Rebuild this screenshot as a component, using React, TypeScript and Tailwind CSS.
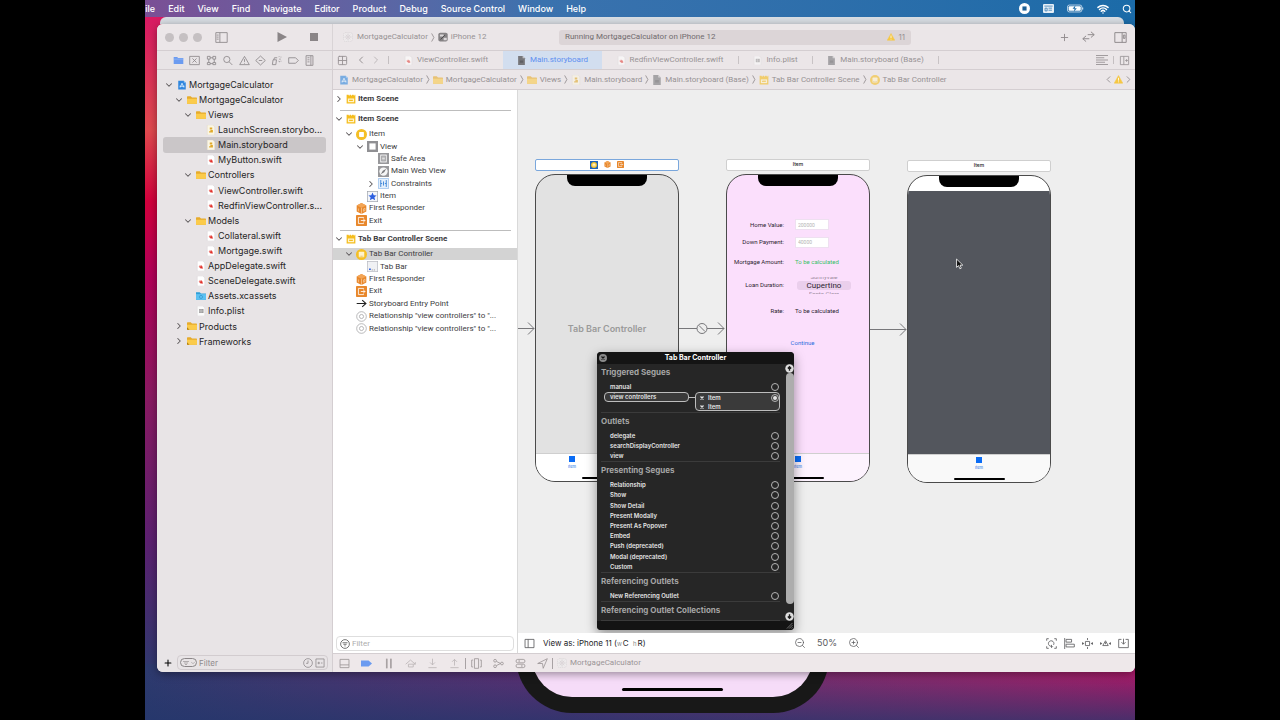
// Xcode workspace on a macOS desktop: navigator, outline, storyboard canvas
// and the floating connections panel of the selected controller.

import React from "react";
import {
  ChevronDown,
  ChevronLeft,
  ChevronRight,
  Grid2x2,
  Plus,
  Search,
  Wifi,
  ZoomIn,
  ZoomOut,
} from "lucide-react";

type IconName =
  | "project"
  | "folder"
  | "group"
  | "assets"
  | "storyboard"
  | "doc"
  | "swift"
  | "plist"
  | "scene"
  | "item"
  | "view"
  | "safe"
  | "web"
  | "constraints"
  | "star"
  | "responder"
  | "exit"
  | "controller"
  | "tabbar"
  | "entry"
  | "relation"
  | "warning"
  | "app"
  | "sim";

// 16x16 artwork for every coloured glyph used in lists, tabs and crumbs.
const ART: Record<IconName, React.ReactNode> = {
  project: (
    <>
      <path d="M2 1h9l3 3v11H2z" fill="#2f86de" />
      <path d="M11 1v3h3z" fill="#b9dcfa" />
      <path d="M5 12l3-7 3 7M4 10h8" stroke="#d5ebff" strokeWidth="1.4" fill="none" />
    </>
  ),
  folder: (
    <>
      <path d="M0 3a1 1 0 0 1 1-1h5l2 2h7a1 1 0 0 1 1 1v8a1 1 0 0 1-1 1H1a1 1 0 0 1-1-1z" fill="#e6ab2c" />
      <path d="M0 6h16v7a1 1 0 0 1-1 1H1a1 1 0 0 1-1-1z" fill="#fbcb4b" />
    </>
  ),
  group: (
    <>
      <path d="M0 3a1 1 0 0 1 1-1h5l2 2h7a1 1 0 0 1 1 1v8a1 1 0 0 1-1 1H1a1 1 0 0 1-1-1z" fill="#e6ab2c" />
      <path d="M0 6h16v7a1 1 0 0 1-1 1H1a1 1 0 0 1-1-1z" fill="#fbcb4b" />
      <path d="M0 10l4 4H1a1 1 0 0 1-1-1z" fill="#b07f14" />
    </>
  ),
  assets: (
    <>
      <path d="M0 2h6l2 2h8v10H0z" fill="#2f9fd8" />
      <path d="M0 5h16v9H0z" fill="#5cc1f2" />
      <circle cx="8" cy="9.5" r="2.5" fill="none" stroke="#2b90c7" />
    </>
  ),
  storyboard: (
    <>
      <path d="M2 0h9l3 3v13H2z" fill="#fbf6e4" stroke="#d9d2bd" strokeWidth=".6" />
      <path d="M6 4h4v3H6zM7 8h4v4H5v-2h2z" fill="#e0a92a" />
    </>
  ),
  doc: (
    <>
      <path d="M2 0h8l4 4v12H2z" fill="#77777b" />
      <path d="M10 0v4h4z" fill="#c9c7ca" />
      <path d="M5 8h6v4H5z" fill="#5f5f63" />
    </>
  ),
  swift: (
    <>
      <path d="M2 0h9l3 3v13H2z" fill="#ffffff" stroke="#cfcacc" strokeWidth=".6" />
      <path
        d="M5 8.500c1.500 1.200 2.500 1.400 3.200 1.300L6 7.300l2.800 1.900L8 7c2 1.300 2.400 2.600 2.200 3.600.6.6.5 1 .3 1.400-.5-.6-1-.4-1.600-.3C7.400 12 5.800 10.800 5 8.500z"
        fill="#e0302a"
        stroke="#e0302a"
        strokeWidth=".7"
      />
    </>
  ),
  plist: (
    <>
      <path d="M2 0h9l3 3v13H2z" fill="#fbfbfb" stroke="#d4d0d2" strokeWidth=".6" />
      <path d="M5 5h7v6H5z" fill="#8d8b8d" />
      <path d="M5 7h7M5 9h7M8 5v6" stroke="#fff" strokeWidth=".5" />
    </>
  ),
  scene: (
    <>
      <path d="M1 1h3l1 2 1-2h2l1 2 1-2h2l1 2 1-2h1v14H1z" fill="#f5bd1d" />
      <path d="M3 7h10v6H3z" fill="#fff4cc" />
      <path d="M5 9h6v2H5z" fill="#f5bd1d" />
    </>
  ),
  item: (
    <>
      <circle cx="8" cy="8" r="8" fill="#f5bf25" />
      <rect x="4.5" y="4.5" width="7" height="7" rx="1" fill="#fff" />
    </>
  ),
  view: (
    <>
      <rect width="16" height="16" fill="#909093" />
      <rect x="3.5" y="3.5" width="9" height="9" fill="#fff" />
    </>
  ),
  safe: (
    <>
      <rect width="16" height="16" fill="#98989b" />
      <rect x="4" y="3" width="8" height="10" fill="none" stroke="#fff" strokeWidth="1.3" />
      <path d="M6 6h4M6 8h4M6 10h4" stroke="#fff" />
    </>
  ),
  web: (
    <>
      <rect width="16" height="16" fill="#98989b" />
      <circle cx="8" cy="8" r="6" fill="#f6f6f6" />
      <path d="M4 12l3-5 5-3-3 5z" fill="#77777a" />
    </>
  ),
  constraints: (
    <>
      <rect x=".5" y=".5" width="15" height="15" rx="1" fill="#e3effc" stroke="#86b3e6" />
      <path d="M4 3v10M12 3v10M8 5v6M4 8h2M10 8h2" stroke="#3f86d9" strokeWidth="1.4" />
    </>
  ),
  star: (
    <>
      <rect x=".5" y=".5" width="15" height="15" fill="#f3f5f9" stroke="#9da2ab" />
      <path d="M8 2l1.800 4 4.200.4-3.200 2.800 1 4.300L8 11.300l-3.800 2.200 1-4.300L2 6.400 6.200 6z" fill="#2c5fe0" />
    </>
  ),
  responder: (
    <>
      <path d="M8 0l7 3.500v9L8 16l-7-3.500v-9z" fill="#e8872b" />
      <path d="M1 3.500L8 7l7-3.500L8 0z" fill="#f3a556" />
      <path d="M8 7v9M3.500 8v4M11 8.500l2-1v3.500l-2 1z" stroke="#fbd9b2" strokeWidth=".9" fill="none" />
    </>
  ),
  exit: (
    <>
      <rect width="16" height="16" rx="1" fill="#e8872b" />
      <path d="M11 5V3.500H3.500v9H11V11M7 8h6M11 6l2 2-2 2" stroke="#fff" strokeWidth="1.2" fill="none" />
    </>
  ),
  controller: (
    <>
      <circle cx="8" cy="8" r="8" fill="#f5bf25" />
      <rect x="4" y="4" width="8" height="8" rx="1" fill="#fff3cb" />
      <path d="M5.500 10.500h1M7.500 10.500h1M9.500 10.500h1" stroke="#c88d00" />
    </>
  ),
  tabbar: (
    <>
      <rect x=".5" y=".5" width="15" height="15" fill="#f0f1f4" stroke="#b7b9c0" />
      <path d="M3 12h2.500" stroke="#2c5fe0" strokeWidth="2.5" />
      <path d="M7 13h1M10 13h1" stroke="#4a4a4d" strokeWidth="1.2" />
    </>
  ),
  entry: <path d="M1 8h13M9 3l5.500 5L9 13" stroke="#222" strokeWidth="1.5" fill="none" />,
  relation: (
    <>
      <circle cx="8" cy="8" r="7" fill="none" stroke="#9b9b9e" />
      <circle cx="8" cy="8" r="3" fill="none" stroke="#9b9b9e" />
    </>
  ),
  warning: (
    <>
      <path d="M8 1l7.500 13.500H.5z" fill="#f6c844" stroke="#f6c844" strokeLinejoin="round" />
      <path d="M8 5v5M8 11.500v1.500" stroke="#fff" strokeWidth="1.5" />
    </>
  ),
  app: (
    <>
      <rect x="1" y="1" width="14" height="14" rx="3" fill="#efeced" stroke="#cfcacc" strokeWidth=".8" strokeDasharray="2 1" />
      <path d="M4 4l8 8M12 4l-8 8M8 2v12M2 8h12" stroke="#d3cdd0" strokeWidth=".7" />
      <circle cx="8" cy="8" r="3.5" fill="none" stroke="#cfcacc" strokeWidth=".7" />
    </>
  ),
  sim: (
    <>
      <rect x=".5" y="1" width="15" height="14" rx="3" fill="#858284" />
      <path d="M3 4h6v3H3zM9 9h5v4H9z" fill="#dcd8da" />
      <path d="M4 12l7-7" stroke="#4c4a4c" strokeWidth="1.5" />
    </>
  ),
};

function Art({ name, className = "size-[10px]" }: { name: IconName; className?: string }) {
  return (
    <svg viewBox="0 0 16 16" className={`shrink-0 ${className}`} aria-hidden="true">
      {ART[name]}
    </svg>
  );
}

// Thin grey line icons, drawn on the same 16x16 grid.
function Line({ d, className = "size-[11px]" }: { d: string; className?: string }) {
  return (
    <svg
      viewBox="0 0 16 16"
      fill="none"
      stroke="currentColor"
      strokeWidth="1.2"
      className={`shrink-0 ${className}`}
      aria-hidden="true"
    >
      <path d={d} />
    </svg>
  );
}

const PANEL_LEFT = "M1 2h14v12H1zM6 2v12M2 5h2.500M2 7.500h2.500M2 10h2.500";
const PANEL_RIGHT = "M1 2h14v12H1zM10 2v12M11.500 5h2v4h-2z";

function IconButton({
  label,
  className = "",
  children,
}: {
  label: string;
  className?: string;
  children: React.ReactNode;
}) {
  return (
    <button type="button" aria-label={label} className={`flex shrink-0 items-center justify-center ${className}`}>
      {children}
    </button>
  );
}

// ─── Menu bar ────────────────────────────────────────────────────────────────

const MENUS = ["File", "Edit", "View", "Find", "Navigate", "Editor", "Product", "Debug", "Source Control", "Window", "Help"];

function MenuBar() {
  return (
    <header className="relative flex h-[17px] shrink-0 items-center justify-between overflow-hidden bg-linear-to-r from-[#7a4f95] via-[#3a72ae] via-40% to-[#1b6ba8] pr-[3px] text-white">
      {/* The first menu runs under the left screen edge */}
      <nav className="-ml-[5px] flex items-center gap-[13px] text-[9px] leading-none font-medium">
        {MENUS.map((menu) => (
          <button key={menu} type="button" className="shrink-0">
            {menu}
          </button>
        ))}
      </nav>
      <div className="flex items-center gap-[13px]">
        <IconButton label="Stop recording">
          <svg viewBox="0 0 16 16" className="size-[11px]">
            <circle cx="8" cy="8" r="8" fill="#fff" />
            <rect x="5" y="5" width="6" height="6" fill="#1b5f96" />
          </svg>
        </IconButton>
        <IconButton label="Input menu">
          <svg viewBox="0 0 16 13" className="h-[9px] w-[11px]">
            <rect width="16" height="13" rx="1.5" fill="#e6eff7" />
            <path d="M2 3h12M3 6h3v4H3zM8 6h5M8 9h5" stroke="#1d6ba7" fill="none" />
          </svg>
        </IconButton>
        <IconButton label="Battery">
          <svg viewBox="0 0 26 12" className="h-[9px] w-[17px]">
            <rect x=".7" y=".7" width="22" height="10.6" rx="3" fill="none" stroke="#dbe8f3" strokeWidth="1.2" />
            <rect x="2.5" y="2.5" width="18.5" height="7" rx="1.5" fill="#fff" />
            <path d="M24 4.500v3" stroke="#dbe8f3" strokeWidth="1.6" />
            <path d="M13 1L8.500 6.500h3L10.500 11 15 5.500h-3z" fill="#1d6ba7" />
          </svg>
        </IconButton>
        <IconButton label="Wi-Fi">
          <Wifi className="size-[12px]" strokeWidth={3} />
        </IconButton>
        <IconButton label="Spotlight">
          <Search className="size-[10px]" strokeWidth={2.5} />
        </IconButton>
      </div>
    </header>
  );
}

// ─── Window toolbar ──────────────────────────────────────────────────────────

function Toolbar() {
  return (
    <div className="flex h-[27px] shrink-0 border-b border-[#d4ced1] bg-[#ebe6e8] text-[#979294]">
      <div className="flex w-[176px] shrink-0 items-center border-r border-[#d9d4d6] pl-[8px]">
        <div className="flex gap-[5px]">
          <button type="button" aria-label="Close" className="size-[9px] rounded-full bg-[#c5c0c2]" />
          <button type="button" aria-label="Minimize" className="size-[9px] rounded-full bg-[#c5c0c2]" />
          <button type="button" aria-label="Zoom" className="size-[9px] rounded-full bg-[#c5c0c2]" />
        </div>
        <IconButton label="Toggle navigator" className="ml-[13px]">
          <Line d={PANEL_LEFT} className="size-[13px]" />
        </IconButton>
        <IconButton label="Run" className="ml-[49px]">
          <svg viewBox="0 0 10 10" className="size-[10px]">
            <path d="M.5 0L10 5 .5 10z" fill="#8a8587" />
          </svg>
        </IconButton>
        <IconButton label="Stop" className="ml-[23px]">
          <span className="size-[8px] bg-[#8a8587]" />
        </IconButton>
      </div>
      <div className="flex min-w-0 flex-1 items-center pr-[8px] pl-[10px]">
        <div className="flex w-[216px] shrink-0 items-center font-[Roboto] text-[8px]">
          <Art name="app" />
          <span className="ml-[4px]">MortgageCalculator</span>
          <Crumb />
          <Art name="sim" />
          <span className="ml-[3px]">iPhone 12</span>
        </div>
        <div className="flex h-[15px] w-[352px] items-center justify-between rounded-[3px] bg-[#dcd5d7] px-[6px] text-[8px] text-[#716b6e]">
          <span className="font-[Roboto]">Running MortgageCalculator on iPhone 12</span>
          <span className="flex items-center gap-[3px] text-[#989294]">
            <Art name="warning" className="size-[8px]" />
            11
          </span>
        </div>
        <div className="ml-auto flex items-center text-[#8f8a8c]">
          <IconButton label="Add">
            <Plus className="size-[11px]" />
          </IconButton>
          <IconButton label="Review changes" className="ml-[12px]">
            <Line d="M5 6l-4 3.500L5 13M1 9.500h8M11 1l4 3.500L11 8M15 4.500H7" className="size-[13px]" />
          </IconButton>
          <IconButton label="Toggle inspectors" className="ml-[19px]">
            <Line d={PANEL_RIGHT} className="size-[13px]" />
          </IconButton>
        </div>
      </div>
    </div>
  );
}

function Crumb() {
  return (
    <svg viewBox="0 0 4 10" className="mx-[3px] h-[9px] w-[4px] shrink-0" fill="none" stroke="currentColor" aria-hidden="true">
      <path d="M.5.5L3 5 .5 9.500" />
    </svg>
  );
}

// ─── Navigator ───────────────────────────────────────────────────────────────

const NAV_ICONS: [string, string][] = [
  ["Source control", "M1 2h14v12H1zM5 5l6 6M11 5l-6 6"],
  ["Symbols", "M2 2h4v4H2zM10 2h4v4h-4zM6 4h4M4 6v5M12 6v5M2 11h4v3H2zM10 11h4v3h-4zM6 12.500h4"],
  ["Find", "M7 2a4.500 4.500 0 1 0 0 9a4.500 4.500 0 0 0 0-9M10.500 10l4.500 4.500"],
  ["Issues", "M8 2l7 12H1zM8 6v4M8 11.500v1"],
  ["Tests", "M8 1.500L15 8 8 14.500 1 8zM5.500 8h5"],
  ["Debug", "M2 14l1-7h5l-1 7zM4 7l1-3h4M11 3l1-1M12 6h2M11 9l2 1M14 3h1M14 9h1"],
  ["Breakpoints", "M1 4h10l4 4-4 4H1z"],
  ["Reports", "M3 1h10v14H3zM10 1v14M5 4h3M5 7h3M5 10h3"],
];

type Node = { label: string; icon: IconName; depth: number; open?: boolean; selected?: boolean };

const FILES: Node[] = [
  { label: "MortgageCalculator", icon: "project", depth: 0, open: true },
  { label: "MortgageCalculator", icon: "folder", depth: 1, open: true },
  { label: "Views", icon: "folder", depth: 2, open: true },
  { label: "LaunchScreen.storybo...", icon: "storyboard", depth: 3 },
  { label: "Main.storyboard", icon: "storyboard", depth: 3, selected: true },
  { label: "MyButton.swift", icon: "swift", depth: 3 },
  { label: "Controllers", icon: "folder", depth: 2, open: true },
  { label: "ViewController.swift", icon: "swift", depth: 3 },
  { label: "RedfinViewController.s...", icon: "swift", depth: 3 },
  { label: "Models", icon: "folder", depth: 2, open: true },
  { label: "Collateral.swift", icon: "swift", depth: 3 },
  { label: "Mortgage.swift", icon: "swift", depth: 3 },
  { label: "AppDelegate.swift", icon: "swift", depth: 2 },
  { label: "SceneDelegate.swift", icon: "swift", depth: 2 },
  { label: "Assets.xcassets", icon: "assets", depth: 2 },
  { label: "Info.plist", icon: "plist", depth: 2 },
  { label: "Products", icon: "group", depth: 1, open: false },
  { label: "Frameworks", icon: "group", depth: 1, open: false },
];

const FILE_INDENT = ["pl-px", "pl-[11px]", "pl-[20px]", "pl-[30px]"];

function Disclosure({ open }: { open?: boolean }) {
  if (open === undefined) return <span className="w-[10px] shrink-0" />;
  const Chevron = open ? ChevronDown : ChevronRight;
  return <Chevron className="size-[10px] shrink-0 text-[#5c585a]" strokeWidth={2.5} />;
}

function Navigator() {
  return (
    <aside className="flex w-[176px] shrink-0 flex-col border-r border-[#d4ced1] bg-[#e8e4e6]">
      <div className="flex h-[19px] shrink-0 items-center justify-between border-b border-[#d4ced1] pr-[17px] pl-[16px] text-[#8b8688]">
        <IconButton label="Project navigator">
          <svg viewBox="0 0 16 16" className="size-[11px]">
            <path d="M1 3h5l1.500 1.500H15V13H1z" fill="#6b9bf0" />
            <path d="M1 6h14" stroke="#a9c5f7" strokeWidth=".8" />
          </svg>
        </IconButton>
        {NAV_ICONS.map(([label, d]) => (
          <IconButton key={label} label={label}>
            <Line d={d} />
          </IconButton>
        ))}
      </div>
      <ul className="mt-[7px] grid h-[272px] shrink-0 px-[6px] text-[9px] text-[#262425]">
        {FILES.map((file, i) => (
          <li
            key={i}
            className={`flex items-center rounded-[3px] ${FILE_INDENT[file.depth]} ${file.selected ? "bg-[#cac6c8]" : ""}`}
          >
            <Disclosure open={file.open} />
            <span className="flex w-[15px] shrink-0 justify-center">
              <Art name={file.icon} />
            </span>
            <span className="whitespace-nowrap">{file.label}</span>
          </li>
        ))}
      </ul>
      <div className="mt-auto flex h-[19px] shrink-0 items-center gap-[4px] pr-[4px] pl-[6px]">
        <IconButton label="Add file">
          <Plus className="size-[10px]" strokeWidth={2.5} />
        </IconButton>
        <div className="flex h-[15px] min-w-0 flex-1 items-center gap-[2px] rounded-[4px] border border-[#d2cccf] px-[2px] text-[#8b8688]">
          <span className="flex h-[9px] w-[17px] shrink-0 items-center justify-center rounded-full border border-[#8b8688]">
            <Line d="M2 5h12M4 8h8M6 11h4" className="size-[8px]" />
            <ChevronDown className="size-[6px]" />
          </span>
          <input
            aria-label="Filter files"
            placeholder="Filter"
            className="w-full min-w-0 bg-transparent text-[8px] outline-none placeholder:text-[#8f8a8c]"
          />
          <Line d="M8 1a7 7 0 1 0 0 14a7 7 0 0 0 0-14M8 4v4.500H5" className="size-[10px]" />
          <Line d="M1.500 1.500h13v13h-13zM4 8h4M6 6v4M9.500 8H12" className="size-[10px]" />
        </div>
      </div>
    </aside>
  );
}

// ─── Tabs and jump bar ───────────────────────────────────────────────────────

const TABS: { label: string; icon: IconName; width: string; active?: boolean }[] = [
  { label: "ViewController.swift", icon: "swift", width: "w-[114px]" },
  { label: "Main.storyboard", icon: "doc", width: "w-[99px]", active: true },
  { label: "RedfinViewController.swift", icon: "swift", width: "w-[137px] border-r" },
  { label: "Info.plist", icon: "plist", width: "w-[74px] border-r" },
  { label: "Main.storyboard (Base)", icon: "doc", width: "w-[126px] border-r" },
];

const CRUMBS: { label: string; icon: IconName }[] = [
  { label: "MortgageCalculator", icon: "project" },
  { label: "MortgageCalculator", icon: "folder" },
  { label: "Views", icon: "folder" },
  { label: "Main.storyboard", icon: "storyboard" },
  { label: "Main.storyboard (Base)", icon: "doc" },
  { label: "Tab Bar Controller Scene", icon: "scene" },
  { label: "Tab Bar Controller", icon: "controller" },
];

function EditorTabs() {
  return (
    <div className="flex h-[19px] shrink-0 items-center border-b border-[#d4ced1] bg-[#ebe6e8] pr-[5px] pl-[4px] text-[#989395]">
      <IconButton label="Related items" className="w-[11px]">
        <Grid2x2 className="size-[11px]" strokeWidth={2} />
      </IconButton>
      <IconButton label="Back" className="ml-[7px]">
        <ChevronLeft className="size-[12px]" />
      </IconButton>
      <IconButton label="Forward" className="ml-[3px]">
        <ChevronRight className="size-[12px] text-[#bdb8ba]" />
      </IconButton>
      <span className="ml-[6px] h-[8px] border-l border-[#c4bfc1]" />
      <div role="tablist" className="flex h-full items-center font-[Roboto] text-[8px]">
        {TABS.map((tab) => (
          <button
            key={tab.label}
            type="button"
            role="tab"
            aria-selected={!!tab.active}
            className={`flex items-center justify-center gap-[4px] border-[#c8c3c5] whitespace-nowrap ${tab.width} ${
              tab.active ? "h-full bg-[#d2deef] text-[#5e8ff0]" : "h-[8px]"
            }`}
          >
            <Art name={tab.icon} className={tab.active ? "size-[9px]" : "size-[9px] opacity-60"} />
            {tab.label}
          </button>
        ))}
      </div>
      <IconButton label="Editor options" className="ml-auto">
        <Line d="M0 2h16M0 5h11M0 8h16M0 11h12M0 14h16" className="size-[12px]" />
      </IconButton>
      <span className="mx-[5px] h-[8px] border-l border-[#c4bfc1]" />
      <IconButton label="Add editor">
        <Line d="M2 2h12v12H2zM7 2v12M9 8h4M11 6v4" />
      </IconButton>
    </div>
  );
}

function JumpBar() {
  return (
    <div className="flex h-[20px] shrink-0 items-center border-b border-[#d4ced1] bg-[#ebe6e8] pr-px pl-[6px] font-[Roboto] text-[8px] text-[#979294]">
      {CRUMBS.map((crumb, i) => (
        <React.Fragment key={i}>
          {i > 0 && <Crumb />}
          <button type="button" className="flex shrink-0 items-center gap-[3px]">
            <Art name={crumb.icon} className="size-[10px] opacity-60" />
            {crumb.label}
          </button>
        </React.Fragment>
      ))}
      <div className="ml-auto flex items-center">
        <ChevronLeft className="size-[11px]" />
        <Art name="warning" className="size-[9px]" />
        <ChevronRight className="size-[11px]" />
      </div>
    </div>
  );
}

// ─── Document outline ────────────────────────────────────────────────────────

const FIRST_SCENE: Node[] = [
  { label: "Item", icon: "item", depth: 0, open: true },
  { label: "View", icon: "view", depth: 1, open: true },
  { label: "Safe Area", icon: "safe", depth: 2 },
  { label: "Main Web View", icon: "web", depth: 2 },
  { label: "Constraints", icon: "constraints", depth: 2, open: false },
  { label: "Item", icon: "star", depth: 1 },
  { label: "First Responder", icon: "responder", depth: 0 },
  { label: "Exit", icon: "exit", depth: 0 },
];

const SECOND_SCENE: Node[] = [
  { label: "Tab Bar Controller", icon: "controller", depth: 0, open: true, selected: true },
  { label: "Tab Bar", icon: "tabbar", depth: 1 },
  { label: "First Responder", icon: "responder", depth: 0 },
  { label: "Exit", icon: "exit", depth: 0 },
  { label: "Storyboard Entry Point", icon: "entry", depth: 0 },
  { label: 'Relationship "view controllers" to "...', icon: "relation", depth: 0 },
  { label: 'Relationship "view controllers" to "...', icon: "relation", depth: 0 },
];

const OUTLINE_INDENT = ["pl-[11px]", "pl-[22px]", "pl-[33px]"];

function SceneTitle({ label, open }: { label: string; open: boolean }) {
  return (
    <div className="flex h-[16px] items-center pl-px font-bold">
      <Disclosure open={open} />
      <Art name="scene" className="ml-[2px] size-[10px]" />
      <span className="ml-[2px]">{label}</span>
    </div>
  );
}

function OutlineList({ nodes, className }: { nodes: Node[]; className: string }) {
  return (
    <ul className={`mt-px grid ${className}`}>
      {nodes.map((node, i) => (
        <li
          key={i}
          className={`flex min-h-0 items-center whitespace-nowrap ${OUTLINE_INDENT[node.depth]} ${
            node.selected ? "bg-[#d3d3d3]" : ""
          }`}
        >
          <Disclosure open={node.open} />
          <Art name={node.icon} className="ml-[2px] size-[11px]" />
          <span className="ml-[2px]">{node.label}</span>
        </li>
      ))}
    </ul>
  );
}

function Outline() {
  return (
    <section className="flex w-[185px] shrink-0 flex-col border-r border-[#d9d9d9] bg-white font-[Roboto] text-[8px] leading-[12px] text-[#3c3c3e]">
      <div className="pt-px">
        <SceneTitle label="Item Scene" open={false} />
      </div>
      <hr className="mt-[3px] mr-[6px] ml-[7px] border-[#bdbdbd]" />
      <SceneTitle label="Item Scene" open />
      <OutlineList nodes={FIRST_SCENE} className="h-[99px]" />
      <hr className="mt-[3px] mr-[6px] ml-[7px] border-[#bdbdbd]" />
      <SceneTitle label="Tab Bar Controller Scene" open />
      <OutlineList nodes={SECOND_SCENE} className="h-[87px]" />
      <div className="mx-[3px] mt-auto mb-[2px] flex h-[15px] shrink-0 items-center gap-[2px] rounded-[4px] border border-[#dedede] px-[3px]">
        <Line
          d="M8 1a7 7 0 1 0 0 14a7 7 0 0 0 0-14M4 6h8M5.500 8.500h5M7 11h2"
          className="size-[10px] text-[#4a4a4a]"
        />
        <input
          aria-label="Filter outline"
          placeholder="Filter"
          className="w-full min-w-0 bg-transparent outline-none placeholder:text-[#adadad]"
        />
      </div>
    </section>
  );
}

// ─── Canvas ──────────────────────────────────────────────────────────────────

function Scene({
  place,
  title,
  selected,
  screen,
  tabBar = "bg-white",
  tabAlign = "self-center",
  children,
}: {
  place: string;
  title: React.ReactNode;
  selected?: boolean;
  screen: string;
  tabBar?: string;
  tabAlign?: string;
  children?: React.ReactNode;
}) {
  return (
    <article className={`absolute w-[144px] ${place}`}>
      <div
        className={`flex h-[12px] items-center justify-center rounded-[2px] border bg-white text-[5px] font-medium text-[#222] ${
          selected ? "border-[#7aa7dc]" : "border-[#cfcfcf]"
        }`}
      >
        {title}
      </div>
      <div
        className={`relative mt-[3px] flex h-[308px] flex-col overflow-hidden rounded-[20px] border border-[#4a4a4a] ${screen}`}
      >
        <div className="absolute top-0 left-1/2 h-[11px] w-[80px] -translate-x-1/2 rounded-b-[8px] bg-black" />
        <div className="min-h-0 flex-1">{children}</div>
        <div className={`flex h-[28px] shrink-0 flex-col border-t border-[#cfcfcf] ${tabBar}`}>
          <div className={`flex w-[72px] flex-1 flex-col items-center pt-[2px] text-[4px] leading-[5px] text-[#1a73e8] ${tabAlign}`}>
            <span className="mb-[2px] size-[6px] bg-[#0a6cf5]" />
            Item
          </div>
          <span className="mb-[2px] h-[2px] w-[51px] self-center rounded-full bg-black" />
        </div>
      </div>
    </article>
  );
}

function Field({ label, height, children }: { label: React.ReactNode; height: string; children: React.ReactNode }) {
  return (
    <div className={`grid grid-cols-[57px_1fr] items-center gap-[11px] ${height}`}>
      <span className="text-right whitespace-nowrap">{label}</span>
      <div>{children}</div>
    </div>
  );
}

function MortgageForm() {
  return (
    <form className="pt-[41px] font-[Roboto] text-[6px] leading-[8px] text-[#2b2430]">
      <Field height="h-[17px]" label={<label htmlFor="home-value">Home Value:</label>}>
        <input
          id="home-value"
          placeholder="200000"
          className="block h-[11px] w-[34px] border border-[#eee0f0] bg-white px-[2px] text-[5px] placeholder:text-[#b4b4b4]"
        />
      </Field>
      <Field height="h-[18px]" label={<label htmlFor="down-payment">Down Payment:</label>}>
        <input
          id="down-payment"
          placeholder="40000"
          className="block h-[11px] w-[34px] border border-[#eee0f0] bg-white px-[2px] text-[5px] placeholder:text-[#b4b4b4]"
        />
      </Field>
      <Field height="h-[22px]" label="Mortgage Amount:">
        <output className="text-[#37c268]">To be calculated</output>
      </Field>
      <Field height="h-[24px]" label="Loan Duration:">
        {/* Wheel picker: the neighbours of the chosen value are half hidden */}
        <div role="listbox" aria-label="Loan duration" className="ml-[2px] flex w-[54px] flex-col items-center">
          <div className="flex h-[4px] items-end overflow-hidden leading-[8px] text-[#9c8d9f]">Sunnyvale</div>
          <div
            role="option"
            aria-selected="true"
            className="h-[9px] w-full rounded-[3px] bg-[#eacfec] text-center font-[Roboto] text-[8px] leading-[9px]"
          >
            Cupertino
          </div>
          <div className="h-[4px] overflow-hidden leading-[8px] text-[#9c8d9f]">Santa Clara</div>
        </div>
      </Field>
      <Field height="h-[28px]" label="Rate:">
        <output>To be calculated</output>
      </Field>
      <div className="flex h-[35px] items-center justify-center pl-[9px]">
        <button type="button" className="text-[#2b6fe0]">
          Continue
        </button>
      </div>
    </form>
  );
}

function Segues() {
  return (
    <svg
      className="absolute top-[228px] left-0 h-[20px] w-[390px]"
      viewBox="0 0 390 20"
      fill="none"
      stroke="#77777a"
      aria-hidden="true"
    >
      <path d="M0 10.500h16M10 4.500l6 6-6 6" />
      <path d="M161 10.500h18M189 10.500h17M200 4.500l6 6-6 6" />
      <circle cx="184" cy="10.5" r="5" />
      <path d="M181 7.500l6 6" />
      <path d="M351 11.500h37M382 5.500l6 6-6 6" />
    </svg>
  );
}

// ─── Connections panel ───────────────────────────────────────────────────────

const PRESENTING = [
  "Relationship",
  "Show",
  "Show Detail",
  "Present Modally",
  "Present As Popover",
  "Embed",
  "Push (deprecated)",
  "Modal (deprecated)",
  "Custom",
];

function Well({ label, connected }: { label: string; connected?: boolean }) {
  return (
    <button
      type="button"
      aria-label={`Connect ${label}`}
      className="flex size-[8px] shrink-0 items-center justify-center rounded-full border border-[#b4b4b4]"
    >
      {connected && <span className="size-[4px] rounded-full bg-[#e2e2e2]" />}
    </button>
  );
}

function Group({
  title,
  rows,
  className = "",
  children,
}: {
  title: string;
  rows?: string[];
  className?: string;
  children?: React.ReactNode;
}) {
  return (
    <section className="border-b border-[#3b3b3b]">
      <h3 className="h-[18px] text-[8px] leading-[17px] font-bold text-[#a5a5a5]">{title}</h3>
      {rows && (
        <ul className={`grid ${className}`}>
          {rows.map((row) => (
            <li key={row} className="flex min-h-0 items-center justify-between pr-px pl-[9px]">
              {row}
              <Well label={row} />
            </li>
          ))}
        </ul>
      )}
      {children}
    </section>
  );
}

function ScrollArrow({ label, d, className = "" }: { label: string; d: string; className?: string }) {
  return (
    <IconButton label={label} className={className}>
      <svg viewBox="0 0 16 16" className="size-[9px]">
        <circle cx="8" cy="8" r="7.5" fill="#dedede" />
        <path d={d} fill="none" stroke="#1c1c1c" strokeWidth="2.4" />
      </svg>
    </IconButton>
  );
}

function ConnectionsPanel() {
  return (
    <div
      role="dialog"
      aria-label="Tab Bar Controller connections"
      className="absolute top-[262px] left-[79px] flex w-[197px] flex-col overflow-hidden rounded-[4px] bg-[#262626] shadow-[0_4px_12px_rgba(0,0,0,0.4)]"
    >
      <div className="flex h-[12px] items-center bg-[#141414] px-[2px] text-[7px] text-white">
        <button
          type="button"
          aria-label="Close panel"
          className="flex size-[8px] items-center justify-center rounded-full bg-[#8a8a8a] text-[#141414]"
        >
          <svg viewBox="0 0 16 16" className="size-[8px]" aria-hidden="true">
            <path d="M5 5l6 6M11 5l-6 6" stroke="currentColor" strokeWidth="2.4" />
          </svg>
        </button>
        <h2 className="flex-1 pr-[8px] text-center font-bold">Tab Bar Controller</h2>
      </div>
      <div className="flex">
        <div className="min-w-0 flex-1 pr-[5px] pl-[4px] text-[6px] leading-[10px] font-semibold text-[#e4e4e4]">
          <Group title="Triggered Segues" rows={["manual"]} className="h-[10px]">
            <div className="flex h-[20px] items-start pl-[3px]">
              <span className="h-[10px] w-[85px] rounded-[4px] border border-[#bdbdbd] bg-[#3a3a3a] pl-[5px] leading-[8px]">
                view controllers
              </span>
              <span className="mt-[5px] w-[6px] border-t border-[#bdbdbd]" />
              <ul className="h-[19px] flex-1 rounded-[4px] border border-[#bdbdbd] bg-[#3a3a3a] pl-[4px] leading-[9px]">
                {[true, false].map((connected, i) => (
                  <li key={i} className="flex h-[9px] items-center">
                    <svg viewBox="0 0 8 8" className="mr-[4px] size-[4px]" aria-hidden="true">
                      <path d="M1 1l6 6M7 1L1 7" stroke="#e4e4e4" strokeWidth="2.5" />
                    </svg>
                    Item
                    {connected && (
                      <span className="ml-auto">
                        <Well label="Item" connected />
                      </span>
                    )}
                  </li>
                ))}
              </ul>
            </div>
          </Group>
          <Group title="Outlets" rows={["delegate", "searchDisplayController", "view"]} className="h-[30px]" />
          <Group title="Presenting Segues" rows={PRESENTING} className="h-[92px]" />
          <Group title="Referencing Outlets" rows={["New Referencing Outlet"]} className="h-[10px]" />
          <Group title="Referencing Outlet Collections" />
        </div>
        <div className="flex w-[9px] shrink-0 flex-col items-center">
          <ScrollArrow label="Scroll up" d="M8 12V5M5 8l3-3 3 3" />
          <span className="w-[8px] flex-1 rounded-full bg-[#adadad]" />
          <ScrollArrow label="Scroll down" d="M8 4v7M5 8l3 3 3-3" className="mt-[8px]" />
        </div>
      </div>
      <div className="flex h-[9px] items-center justify-end bg-[#141414] pr-px">
        <Line d="M2 15L15 2M7 15l8-8M12 15l3-3" className="size-[7px] text-[#bdbdbd]" />
      </div>
    </div>
  );
}

function Canvas() {
  return (
    <div className="relative min-h-0 flex-1 overflow-hidden bg-[#eeeeee]">
      <Segues />
      <Scene
        place="top-[69px] left-[17px]"
        selected
        screen="bg-[#e2e2e2]"
        tabAlign="self-start"
        title={
          <span className="flex gap-[6px]">
            <span className="flex size-[8px] items-center justify-center bg-[#1f62b8]">
              <Art name="controller" className="size-[6px]" />
            </span>
            <Art name="responder" className="size-[7px]" />
            <Art name="exit" className="size-[7px]" />
          </span>
        }
      >
        <div className="flex h-full items-center justify-center pt-[29px] text-[9px] font-semibold text-[#9a9a9a]">
          Tab Bar Controller
        </div>
      </Scene>
      <Scene place="top-[69px] left-[208px]" title="Item" screen="bg-[#fbdffc]" tabBar="bg-[#fdf3fe]">
        <MortgageForm />
      </Scene>
      <Scene place="top-[70px] left-[389px]" title="Item" screen="bg-white" tabBar="bg-[#f9f9f9]">
        <div className="h-full pt-[15px]">
          <div className="h-full bg-[#53565d]" />
        </div>
      </Scene>
      <ConnectionsPanel />
      <svg viewBox="0 0 10 14" className="absolute top-[168px] left-[438px] h-[12px] w-[8px]" aria-hidden="true">
        <path d="M.7.8v10.400L3.200 9l1.700 4 1.700-.8L5 8.400h3.500z" fill="#111" stroke="#fff" />
      </svg>
    </div>
  );
}

const CANVAS_TOOLS: [string, string][] = [
  ["Update frames", "M1 4V1h3M12 1h3v3M15 12v3h-3M4 15H1v-3M11 10a4 4 0 1 0-3 2M8 10v4l2-2"],
  ["Align", "M1 0v16M3 2h8v4H3zM3 9h12v4H3z"],
  ["Add constraints", "M5 5h6v6H5zM0 8h3M13 8h3M8 0v3M8 13v3M1 6v4M15 6v4"],
  ["Resolve issues", "M8 4l4 7H4zM8 6v3M0 8h3M13 8h3M1 6v4M15 6v4"],
  ["Embed in", "M5 2H1v12h14V2h-4M8 1v8M5 6l3 3 3-3"],
];

function CanvasBar() {
  return (
    <div className="flex h-[20px] shrink-0 items-center bg-white px-[6px] text-[8px] text-[#5b5b5d]">
      <IconButton label="Toggle outline">
        <Line d="M1.500 2h13v12h-13zM6 2v12" />
      </IconButton>
      <button type="button" className="ml-[8px] w-[112px] shrink-0 text-left whitespace-nowrap text-[#1d1d1f]">
        View as: iPhone 11 (<span className="mr-px text-[6px] text-[#8a8a8a]">w</span>C{" "}
        <span className="mr-px ml-[2px] text-[6px] text-[#8a8a8a]">h</span>R)
      </button>
      <div className="mr-auto ml-[139px] flex items-center gap-[11px]">
        <IconButton label="Zoom out">
          <ZoomOut className="size-[12px]" strokeWidth={1.5} />
        </IconButton>
        <span className="text-[9px]">50%</span>
        <IconButton label="Zoom in">
          <ZoomIn className="size-[12px]" strokeWidth={1.5} />
        </IconButton>
      </div>
      <div className="flex gap-[7px]">
        {CANVAS_TOOLS.map(([label, d]) => (
          <IconButton key={label} label={label}>
            <Line d={d} />
          </IconButton>
        ))}
      </div>
    </div>
  );
}

// ─── Debug bar ───────────────────────────────────────────────────────────────

const STEP_ICONS: [string, string][] = [
  ["Pause", "M5 1v14M11 1v14M6 1v14M12 1v14"],
  ["Step over", "M5 13h7V9H5zM1 9l7-6 7 6M12 9h3V6"],
  ["Step into", "M8 1v9M4.500 6.500L8 10l3.500-3.500M2 14h12"],
  ["Step out", "M8 11V2M4.500 5.500L8 2l3.500 3.500M2 14h12"],
];

const TOOL_ICONS: [string, string][] = [
  ["View hierarchy", "M5 1h6v14H5zM3 3H1v10h2M13 3h2v10h-2"],
  [
    "Memory graph",
    "M3 2a2 2 0 1 0 0 4a2 2 0 0 0 0-4M3 10a2 2 0 1 0 0 4a2 2 0 0 0 0-4M13 6a2 2 0 1 0 0 4a2 2 0 0 0 0-4M5 5l6 3M5 11l6-3",
  ],
  [
    "Environment",
    "M4 2h8a2 2 0 0 1 0 5H4a2 2 0 0 1 0-5M4 9h8a2 2 0 0 1 0 5H4a2 2 0 0 1 0-5M6 3v3M10 10v3",
  ],
  ["Simulate location", "M1 8L15 1 9 15 8 8z"],
];

function DebugBar() {
  return (
    <div className="flex h-[19px] shrink-0 items-center border-t border-[#d4ced1] bg-[#eee8ea] pl-[6px] font-[Roboto] text-[8px] text-[#9b9597]">
      <div className="flex gap-[11px]">
        <IconButton label="Hide debug area">
          <Line d="M1.500 2h13v12h-13zM1.500 10h13" />
        </IconButton>
        <IconButton label="Breakpoints">
          <svg viewBox="0 0 16 16" className="size-[11px]">
            <path d="M0 3.500h11L16 8l-5 4.500H0z" fill="#6b9bf0" />
          </svg>
        </IconButton>
        {STEP_ICONS.map(([label, d]) => (
          <IconButton key={label} label={label} className={label === "Pause" ? "" : "opacity-60"}>
            <Line d={d} />
          </IconButton>
        ))}
      </div>
      <span className="mx-[5px] h-[11px] border-l border-[#a8a2a4]" />
      <div className="flex gap-[11px]">
        {TOOL_ICONS.map(([label, d]) => (
          <IconButton key={label} label={label}>
            <Line d={d} />
          </IconButton>
        ))}
      </div>
      <span className="mx-[4px] h-[11px] border-l border-[#a8a2a4]" />
      <Art name="app" />
      <span className="ml-[3px]">MortgageCalculator</span>
    </div>
  );
}

export default function App() {
  return (
    <div className="h-screen overflow-hidden bg-black px-[145px] font-[Inter,'Liberation_Sans',sans-serif]">
      <div className="relative flex h-full flex-col overflow-hidden bg-[linear-gradient(to_bottom,#d81b62_3%,#e04a4e_18%,#d2003c_28%,#b20058_38%,#8a1a62_55%,#5c2070_75%,#2d3a6e_94%)]">
        <div className="absolute inset-x-0 top-0 h-[40px] bg-linear-to-r from-[#d81b62]/0 from-10% via-[#3a72ae] via-40% to-[#1b6ba8]" />
        <div className="absolute inset-x-0 bottom-0 h-[56px] bg-linear-to-r from-[#2d3a6e] via-[#5a2f72] via-40% to-[#a81a68]" />
        <div className="absolute inset-x-0 bottom-0 h-[48px] bg-linear-to-b from-transparent to-[#23366b]/70" />

        {/* Simulator window peeking out below the editor */}
        <div className="absolute bottom-[7px] left-[371px] h-[90px] w-[313px] rounded-b-[56px] bg-[#181818] px-[16px] pb-[16px]">
          <div className="flex h-full items-end justify-center rounded-b-[40px] bg-[#f6dcf8] pb-[6px]">
            <span className="h-[3px] w-[101px] rounded-full bg-black" />
          </div>
        </div>

        <MenuBar />
        <div className="relative mr-[11px] ml-[15px] h-[7px] shrink-0 rounded-t-[6px] bg-[#d8dde3]" />
        <main className="relative mb-[48px] ml-[12px] flex min-h-0 flex-1 flex-col overflow-hidden rounded-[6px] bg-[#ebe6e8] shadow-[0_2px_8px_rgba(0,0,0,0.4)]">
          <Toolbar />
          <div className="flex min-h-0 flex-1">
            <Navigator />
            <div className="flex min-w-0 flex-1 flex-col">
              <EditorTabs />
              <JumpBar />
              <div className="flex min-h-0 flex-1">
                <Outline />
                <div className="flex min-w-0 flex-1 flex-col">
                  <Canvas />
                  <CanvasBar />
                </div>
              </div>
              <DebugBar />
            </div>
          </div>
        </main>
      </div>
    </div>
  );
}
